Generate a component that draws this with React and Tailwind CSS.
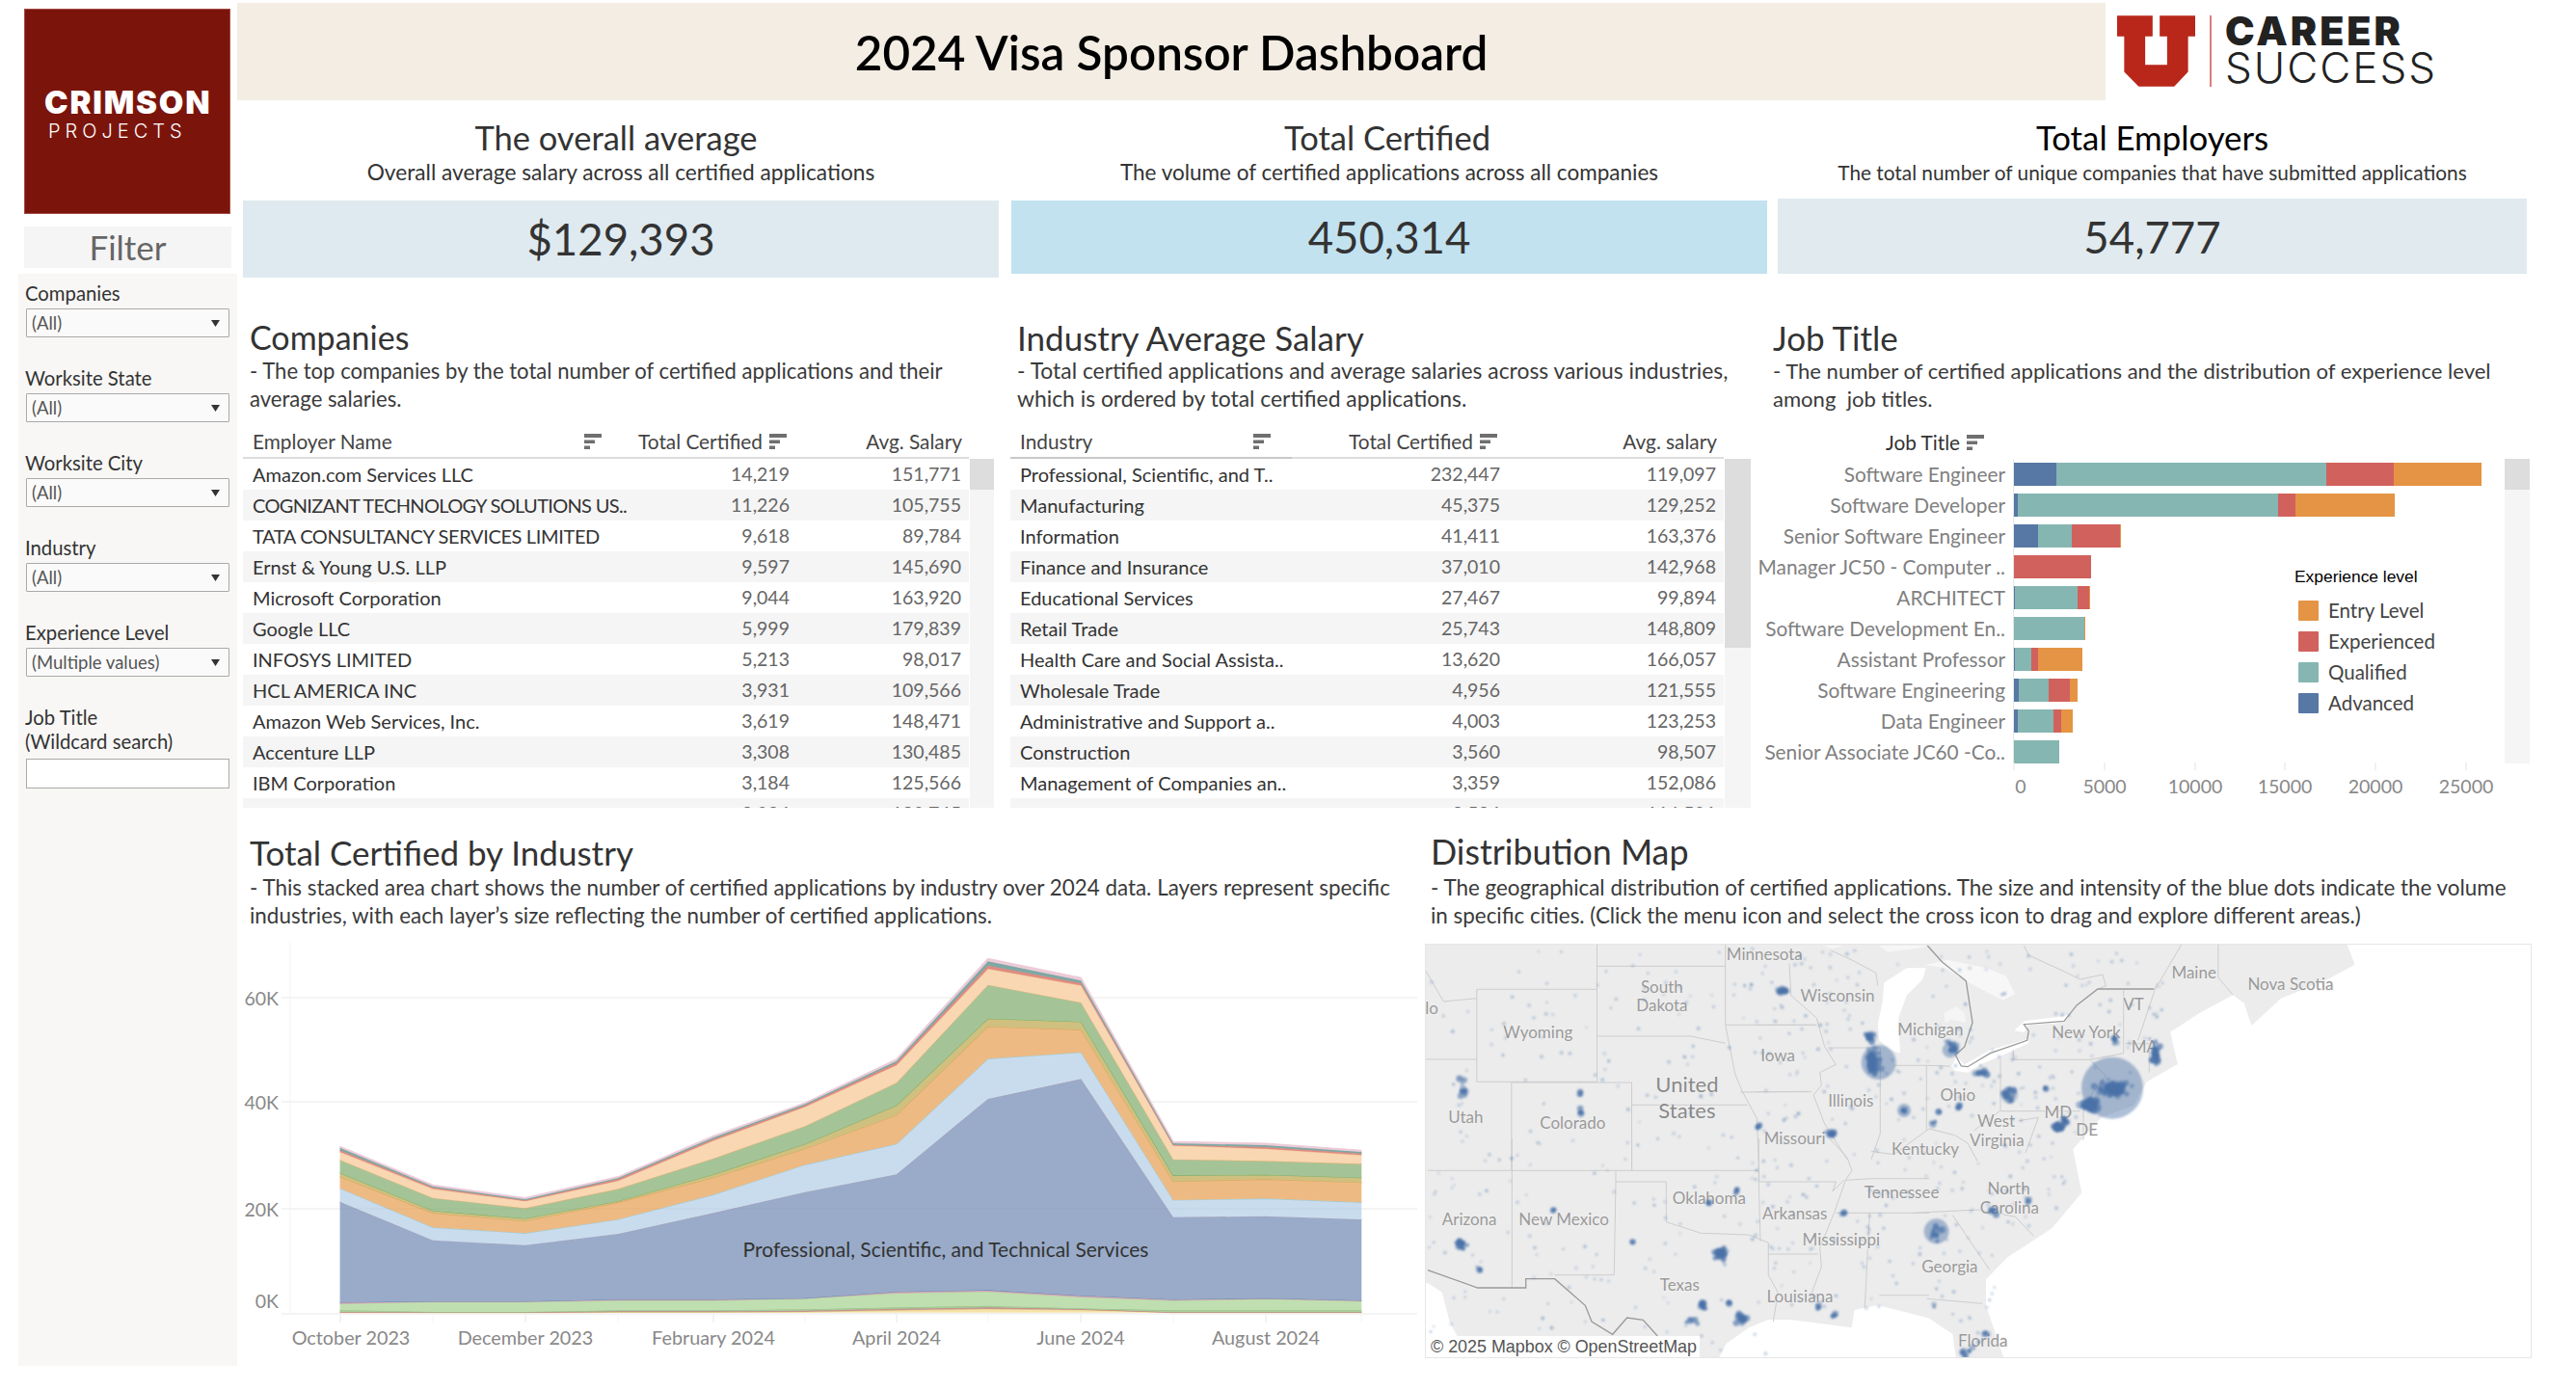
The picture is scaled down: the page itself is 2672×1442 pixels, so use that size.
import React from "react"

const FONT = "font-['Lato','Noto_Sans',sans-serif]"

/* ─── table data ─── */
const COMPANIES = [
  ["Amazon.com Services LLC", "14,219", "151,771"],
  ["COGNIZANT TECHNOLOGY SOLUTIONS US..", "11,226", "105,755", "tracking-[-0.68px]"],
  ["TATA CONSULTANCY SERVICES LIMITED", "9,618", "89,784", "tracking-[-0.36px]"],
  ["Ernst & Young U.S. LLP", "9,597", "145,690"],
  ["Microsoft Corporation", "9,044", "163,920"],
  ["Google LLC", "5,999", "179,839"],
  ["INFOSYS LIMITED", "5,213", "98,017"],
  ["HCL AMERICA INC", "3,931", "109,566"],
  ["Amazon Web Services, Inc.", "3,619", "148,471"],
  ["Accenture LLP", "3,308", "130,485"],
  ["IBM Corporation", "3,184", "125,566"],
  ["Intel Corporation", "3,034", "180,745"],
]

const INDUSTRIES = [
  ["Professional, Scientific, and T..", "232,447", "119,097"],
  ["Manufacturing", "45,375", "129,252"],
  ["Information", "41,411", "163,376"],
  ["Finance and Insurance", "37,010", "142,968"],
  ["Educational Services", "27,467", "99,894"],
  ["Retail Trade", "25,743", "148,809"],
  ["Health Care and Social Assista..", "13,620", "166,057"],
  ["Wholesale Trade", "4,956", "121,555"],
  ["Administrative and Support a..", "4,003", "123,253"],
  ["Construction", "3,560", "98,507"],
  ["Management of Companies an..", "3,359", "152,086"],
  ["Transportation and Warehousing", "2,524", "116,501"],
]

// segment widths in px: advanced, qualified, experienced, entry
const JOBS = [
  ["Software Engineer", 44, 280, 70, 91],
  ["Software Developer", 4, 270, 18, 103],
  ["Senior Software Engineer", 25, 35, 50, 1],
  ["Manager JC50 - Computer ..", 0, 0, 80, 0],
  ["ARCHITECT", 1, 65, 12, 1],
  ["Software Development En..", 0, 73, 0, 1],
  ["Assistant Professor", 1, 17, 7, 46],
  ["Software Engineering", 5, 31, 22, 8],
  ["Data Engineer", 4, 37, 8, 12],
  ["Senior Associate JC60 -Co..", 0, 47, 0, 0],
]

function SortIcon({ className = "" }) {
  return (
    <svg className={className} width="18" height="16" viewBox="0 0 18 16" fill="#6f6f6f">
      <rect x="0" y="0" width="18" height="4" />
      <rect x="0" y="6.5" width="11" height="3.5" />
      <rect x="0" y="12.5" width="6" height="3.5" />
    </svg>
  )
}

function Filter({ label, value, className = "" }) {
  return (
    <div className={className}>
      <div className="text-[20.3px] leading-[25px] text-[#333] pl-[7px] whitespace-nowrap">{label}</div>
      <div className="ml-[8px] mt-[3px] w-[211px] h-[30px] border border-[#aaa] bg-[#fafafa] rounded-[1px] flex items-center justify-between pl-[5px] pr-[9px]">
        <span className="text-[18.5px] text-[#555] pt-[1px]">{value}</span>
        <svg width="9" height="7" viewBox="0 0 9 7" fill="#333"><path d="M0 0h9L4.5 7z" /></svg>
      </div>
    </div>
  )
}

function DataTable({ nameHeader, avgHeader, rows, widthClass, labelClass, certClass, avgClass, iconClass, scrollThumbClass, headerAccent }) {
  return (
    <div>
      <div className={`${widthClass} h-[48px] flex items-end border-b-2 border-[#ddd] text-[20.8px] text-[#444] whitespace-nowrap`}>
        <div className={`${labelClass} relative pl-[10px] h-full flex items-end pb-[1px] ${headerAccent ? "border-b-2 -mb-[2px] border-[#c8c8c8]" : ""}`}>
          {nameHeader}
          <SortIcon className={iconClass} />
        </div>
        <div className={`${certClass} h-full flex items-end justify-end pb-[1px] pr-[3px]`}>
          Total Certified
          <SortIcon className="ml-[7px] mb-[7px]" />
        </div>
        <div className={`${avgClass} h-full flex items-end justify-end pb-[1px] pr-[7px]`}>{avgHeader}</div>
      </div>
      <div className="flex h-[362px] overflow-hidden">
        <div className={widthClass}>
          {rows.map((r, i) => (
            <div key={r[0]} className={`h-[32px] flex items-center ${i % 2 ? "bg-[#f5f5f5]" : "bg-white"}`}>
              <div className={`${labelClass} pl-[10px] text-[20px] text-[#333] whitespace-nowrap ${r[3] || ""}`}>{r[0]}</div>
              <div className={`${certClass} text-right text-[19.5px] text-[#666]`}>{r[1]}</div>
              <div className={`${avgClass} text-right pr-[8px] text-[19.5px] text-[#666]`}>{r[2]}</div>
            </div>
          ))}
        </div>
        <div className="flex-1 ml-[1px] bg-[#f5f5f5]">
          <div className={`${scrollThumbClass} bg-[#ddd]`} />
        </div>
      </div>
    </div>
  )
}

function JobChart() {
  const ticks = [2183, 2277, 2370, 2464, 2558]
  return (
    <div className="relative">
      <div className="h-[48px] pl-[140px] pb-[2px] flex items-end text-[20.8px] text-[#333]">
        Job Title
        <SortIcon className="ml-[7px] mb-[7px]" />
      </div>
      <div className="flex h-[316px]">
        <div className="w-[782px] overflow-hidden">
          {JOBS.map((j) => (
            <div key={j[0]} className="h-[32px] flex items-center">
              <div className="w-[264px] text-right text-[20.8px] text-[#808080] whitespace-nowrap">{j[0]}</div>
              <div className="ml-[8px] h-[32px] flex items-center border-l border-[#e6e6e6]">
                <div className="h-[24px] flex">
                  <div className="bg-[#5778a4]" style={{ width: j[1] }} />
                  <div className="bg-[#85b6b2]" style={{ width: j[2] }} />
                  <div className="bg-[#d1615d]" style={{ width: j[3] }} />
                  <div className="bg-[#e49444]" style={{ width: j[4] }} />
                </div>
              </div>
            </div>
          ))}
        </div>
        <div className="w-[26px] bg-[#f5f5f5]">
          <div className="h-[32px] bg-[#ddd]" />
        </div>
      </div>
      <svg width="782" height="50" viewBox="1816 790 782 50" className="block -mt-[1px]">
        {[2089, ...ticks].map((t) => (
          <line key={t} x1={t} x2={t} y1="790" y2="798" stroke="#e2e2e2" />
        ))}
        {["0", "5000", "10000", "15000", "20000", "25000"].map((t, i) => (
          <text key={t} x={i === 0 ? 2096 : ticks[i - 1]} y="822" textAnchor="middle" fontSize="19.5" fill="#888">{t}</text>
        ))}
      </svg>
      {/* legend sits over the plot */}
      <div className="absolute left-[564px] top-[158px]">
        <div className="font-['Liberation_Sans',sans-serif] text-[17.4px] leading-[24px] text-black whitespace-nowrap">Experience level</div>
        <div className="mt-[13px] ml-[4px] flex flex-col gap-[11px]">
          {[["Entry Level", "bg-[#e49444]"], ["Experienced", "bg-[#d1615d]"], ["Qualified", "bg-[#85b6b2]"], ["Advanced", "bg-[#5778a4]"]].map(([n, c]) => (
            <div key={n} className="flex items-center h-[21px] text-[20.5px] text-[#444]">
              <div className={`w-[21px] h-[21px] rounded-[1px] ${c}`} />
              <span className="ml-[10px]">{n}</span>
            </div>
          ))}
        </div>
      </div>
    </div>
  )
}

/* ─── stacked area ─── */
const AX = [155, 277, 398, 520, 645, 765, 885, 1005, 1127, 1248, 1369, 1495]
const LAYERS = [
  ["#f5e3a8", "#e9d38c", [1205, 1205, 1205, 1204, 1204, 1203, 1198, 1194, 1197, 1205, 1205, 1205]],
  ["#c99a95", "#c08a88", [1203, 1204, 1204, 1201, 1201, 1199, 1193, 1189, 1194, 1204, 1204, 1204]],
  ["#a9cf9a", "#9cc48c", [1197, 1203, 1203, 1198, 1198, 1195, 1189, 1184, 1192, 1198, 1198, 1198]],
  ["#c0dfb0", "#b5d6a5", [1178, 1172, 1172, 1168, 1168, 1162, 1145, 1140, 1157, 1168, 1163, 1170]],
  ["#d9a6b8", "#6f8ab2", [1173, 1170, 1170, 1164, 1164, 1160, 1140, 1135, 1152, 1164, 1160, 1167]],
  ["#99abc8", "#a8a3bd", [860, 980, 995, 960, 895, 830, 775, 540, 478, 908, 905, 915]],
  ["#c9dcee", "#a3ccd2", [818, 940, 958, 915, 838, 745, 680, 415, 395, 855, 850, 862]],
  ["#eeba83", "#d9a860", [782, 895, 920, 862, 785, 695, 590, 315, 325, 797, 790, 800]],
  ["#d0c07f", "#7fae68", [770, 888, 912, 858, 775, 680, 560, 290, 300, 778, 776, 785]],
  ["#a4c497", "#e0b47c", [730, 848, 880, 820, 725, 625, 490, 185, 240, 728, 733, 742]],
  ["#f8d7b2", "#f0c49a", [705, 820, 858, 795, 670, 565, 435, 135, 187, 685, 695, 715]],
  ["#e08a80", "#e08a80", [700, 816, 856, 790, 665, 560, 428, 125, 180, 683, 690, 710]],
  ["#7fa8a5", "#7fa8a5", [692, 812, 852, 786, 660, 556, 422, 112, 172, 678, 684, 705]],
  ["#eccbd8", "#eccbd8", [688, 808, 848, 782, 655, 552, 416, 103, 163, 673, 678, 700]],
]
const ax = (x) => 230 + x / 1.2645
const ay = (y) => 960 + y / 3

function AreaChart() {
  const pts = (ys) => ys.map((y, i) => `${ax(AX[i]).toFixed(1)},${ay(y).toFixed(1)}`)
  const base = AX.map(() => 1205)
  const months = [["October 2023", 364], ["December 2023", 545], ["February 2024", 740], ["April 2024", 930], ["June 2024", 1121], ["August 2024", 1313]]
  return (
    <svg width="1224" height="453" viewBox="246 964 1224 453" className="block">
      <line x1="301" x2="301" y1="977" y2="1363" stroke="#f3f3f3" />
      {[[1035, "60K", 1043], [1143, "40K", 1151], [1254, "20K", 1262], [1363, "0K", 1357]].map(([y, t, ty]) => (
        <g key={t}>
          <line x1="292" x2="1470" y1={y} y2={y} stroke="#f0f0f0" strokeWidth="1.5" />
          <text x="289" y={ty} textAnchor="end" fontSize="19.5" fill="#888">{t}</text>
        </g>
      ))}
      {LAYERS.map(([fill, stroke, ys], i) => {
        const below = i === 0 ? base : LAYERS[i - 1][2]
        const d = [...pts(ys), ...pts(below).reverse()].join(" ")
        return (
          <g key={i}>
            <polygon points={d} fill={fill} />
            <polyline points={pts(ys).join(" ")} fill="none" stroke={stroke} strokeWidth="1.2" />
          </g>
        )
      })}
      <line x1="353" x2="1412" y1="1254" y2="1254" stroke="#000" strokeOpacity="0.025" strokeWidth="1.5" />
      {[353, 449, 545, 641, 740, 835, 930, 1025, 1121, 1217, 1313, 1412].map((x, i) => (
        <line key={x} x1={x} x2={x} y1="1364" y2="1372" stroke={i % 2 ? "#f4f4f4" : "#e6e6e6"} />
      ))}
      {months.map(([t, x]) => (
        <text key={t} x={x} y="1395" textAnchor="middle" fontSize="19.8" fill="#888">{t}</text>
      ))}
      <text x="981" y="1304" textAnchor="middle" fontSize="21" fill="#333">Professional, Scientific, and Technical Services</text>
    </svg>
  )
}

/* ─── map: coordinates read off the reference, three crops with their own scale ─── */
const z6 = ([x, y]) => [(x - 11) / 1.3067, (y - 58) / 3]
const z1 = ([x, y]) => [342 + x / 3, -4 + y / 3]
const z2 = ([x, y]) => [2 + x / 3, 201 + y / 3]
const toPts = (arr, f) => arr.map((p) => f(p).map((n) => n.toFixed(1)).join(",")).join(" ")

const LAND = [[11, 58], [1260, 58], [1270, 120], [1230, 170], [1170, 225], [1130, 310], [1120, 240], [1105, 215], [1060, 270], [1020, 330], [1030, 430], [988, 485], [970, 560], [927, 595], [888, 695], [900, 830], [860, 940], [800, 1030], [770, 1100], [770, 1180], [795, 1350], [730, 1350], [725, 1270], [692, 1220], [623, 1180], [592, 1195], [588, 1250], [523, 1230], [505, 1225], [475, 1225], [449, 1250], [418, 1300], [407, 1350], [70, 1350], [52, 1270], [43, 1230], [33, 1140], [13, 1110], [11, 1110]]

const LAKES = [
  ["#fff", [[400, 130], [470, 85], [530, 85], [520, 120], [470, 170], [445, 240], [450, 350], [420, 340], [385, 310], [380, 260], [395, 190]]],
  ["#f7f7f7", [[525, 75], [600, 60], [720, 85], [780, 110], [808, 165], [770, 185], [720, 160], [655, 125], [590, 85]]],
  ["#f5f5f5", [[585, 225], [625, 205], [650, 225], [655, 255], [610, 245], [590, 255]]],
  ["#fff", [[610, 390], [625, 360], [650, 385], [730, 340], [850, 305], [850, 318], [760, 360], [700, 385], [660, 410], [620, 405]]],
  ["#fff", [[805, 280], [835, 250], [960, 235], [990, 215], [960, 255], [850, 262], [835, 285]]],
  ["#f6f6f6", [[385, 15], [410, 35], [450, 30], [520, 20], [530, 15]]],
  ["#f6f6f6", [[210, 15], [270, 15], [240, 25]]],
]

const LINES_Z6 = [
  [[80, 197], [243, 197], [243, 485], [80, 485], [80, 197]],
  [[243, 58], [243, 197]],
  [[243, 125], [417, 125]],
  [[243, 343], [370, 343], [417, 365]],
  [[417, 58], [417, 308], [430, 460], [440, 515], [460, 600], [463, 795]],
  [[417, 308], [540, 308]],
  [[437, 517], [530, 515]],
  [[127, 487], [290, 487], [290, 760]],
  [[127, 487], [127, 760]],
  [[290, 557], [447, 557]],
  [[11, 415], [80, 415]],
  [[11, 140], [35, 235], [80, 225]],
  [[1085, 58], [1085, 160], [1105, 215]],
  [[1035, 58], [1000, 195]],
  [[672, 893], [760, 883], [810, 905], [835, 965]],
  [[690, 1160], [765, 1175]],
  [[725, 900], [775, 1070]],
]
const LINES_Z1 = [
  [[835, 15], [850, 45], [960, 95], [1010, 120], [1080, 105], [1090, 140], [1065, 150]],
  [[235, 30], [300, 60], [375, 100], [380, 140]],
  [[0, 262], [190, 262]],
  [[105, 70], [110, 170], [190, 240], [215, 330], [250, 385], [200, 410], [205, 450], [180, 480], [215, 570], [285, 680]],
  [[225, 333], [388, 333], [388, 600], [360, 680]],
  [[430, 388], [532, 388], [532, 590]],
  [[532, 388], [605, 390]],
  [[762, 370], [762, 530], [1010, 530]],
  [[802, 340], [802, 370], [1040, 370], [1090, 420], [1050, 470], [1020, 530]],
  [[0, 470], [175, 470]],
  [[360, 655], [430, 665], [540, 585], [620, 605], [660, 630], [690, 685]],
  [[680, 590], [760, 530]],
  [[820, 560], [880, 550], [840, 660]],
  [[1040, 370], [1145, 350], [1145, 150]],
  [[1150, 320], [1225, 320], [1225, 410]],
  [[1250, 130], [1190, 310]],
  [[1020, 530], [1020, 620]],
]
const LINES_Z2 = [
  [[0, 100], [1030, 100]],
  [[262, 0], [262, 465]],
  [[635, 0], [635, 100]],
  [[1030, 0], [1030, 135], [1035, 320]],
  [[585, 100], [585, 135], [742, 135], [742, 260], [850, 295], [1000, 300], [1060, 325], [1060, 425], [1090, 480], [1075, 570]],
  [[585, 135], [580, 425], [395, 425]],
  [[1030, 135], [1270, 135], [1260, 165], [1295, 130]],
  [[1060, 360], [1215, 360]],
  [[1250, 0], [1305, 60], [1320, 100], [1300, 130], [1265, 230], [1220, 340], [1225, 400], [1195, 480]],
  [[1270, 232], [1560, 232]],
  [[1375, 232], [1360, 525]],
  [[1405, 488], [1560, 488]],
  [[1300, 130], [1380, 125], [1560, 125]],
]

const BORDER_Z1 = [[535, 15], [580, 65], [655, 125], [675, 255], [650, 330], [622, 355], [640, 390], [660, 392], [730, 350], [845, 310], [850, 280], [835, 260], [960, 250], [1000, 200], [1065, 150], [1240, 150]]
const BORDER_Z2 = [[0, 410], [155, 465], [305, 465], [305, 437], [395, 437], [490, 520], [510, 570], [575, 610], [620, 558], [670, 565], [715, 615]]

// translucent halos of the largest cities: crop, x, y, radius, opacity
const HALOS = [
  [z1, 1110, 458, 32, 0.45], [z1, 383, 378, 18, 0.45], [z1, 605, 340, 8, 0.45], [z1, 462, 528, 7, 0.45], [z1, 790, 480, 9, 0.3],
  [z6, 703, 950, 13, 0.45], [z1, 360, 298, 6, 0.35],
]
// tight groups of small dots: crop, x, y, spread x, spread y, count
const GROUPS = [
  [z1, 1115, 460, 75, 28, 110], [z1, 1040, 510, 42, 28, 60], [z1, 365, 375, 32, 55, 60], [z1, 360, 298, 20, 20, 16],
  [z1, 612, 330, 26, 26, 18], [z1, 82, 155, 26, 15, 20], [z1, 462, 528, 10, 10, 5], [z1, 705, 410, 26, 13, 14],
  [z1, 790, 480, 30, 30, 22], [z1, 938, 582, 30, 20, 32], [z1, 965, 560, 12, 14, 10], [z1, 235, 600, 18, 15, 14],
  [z1, 635, 518, 10, 10, 5], [z1, 555, 565, 14, 8, 5], [z1, 570, 530, 10, 8, 3], [z1, 10, 578, 10, 8, 5],
  [z1, 1245, 350, 18, 38, 34], [z1, 1118, 315, 6, 14, 5], [z1, 900, 460, 14, 4, 3],
  [z2, 105, 330, 24, 18, 18], [z2, 163, 410, 6, 10, 4], [z2, 910, 358, 34, 30, 40], [z2, 860, 520, 18, 15, 16],
  [z2, 975, 558, 24, 26, 22], [z2, 938, 510, 8, 8, 4], [z2, 820, 570, 24, 12, 6], [z2, 1265, 550, 12, 6, 5],
  [z2, 1215, 525, 7, 9, 4], [z2, 960, 160, 8, 8, 4], [z2, 875, 200, 6, 5, 3], [z2, 390, 225, 5, 8, 3], [z2, 640, 322, 8, 4, 3],
  [z2, 1295, 232, 8, 6, 4], [z6, 62, 512, 7, 45, 14], [z6, 703, 950, 14, 35, 14], [z6, 220, 520, 3, 16, 4], [z6, 220, 575, 4, 28, 6],
  [z6, 780, 890, 7, 18, 5], [z6, 828, 850, 5, 14, 3], [z6, 745, 1330, 14, 28, 8], [z6, 770, 1270, 5, 14, 3], [z6, 700, 1180, 4, 8, 2],
  [z6, 945, 355, 5, 28, 5],
]

const MAP_LABELS = [
  ["Minnesota", 470, 88], ["Wisconsin", 569, 218], ["South", 331, 190], ["Dakota", 331, 248], ["Wyoming", 163, 331],
  ["Michigan", 695, 322], ["Iowa", 488, 403], ["New York", 906, 330], ["MA", 985, 376], ["VT", 970, 245], ["Maine", 1052, 145],
  ["Nova Scotia", 1183, 181], ["Utah", 65, 596], ["Colorado", 210, 612], ["Illinois", 587, 543], ["Ohio", 732, 525], ["Missouri", 511, 662],
  ["MD", 868, 580], ["DE", 907, 635], ["West", 784, 608], ["Virginia", 785, 668], ["Kentucky", 688, 694], ["Tennessee", 656, 830],
  ["North", 801, 818], ["Carolina", 802, 876], ["Oklahoma", 395, 847], ["Arkansas", 511, 896], ["Arizona", 70, 912], ["New Mexico", 198, 912],
  ["Mississippi", 574, 976], ["Georgia", 721, 1061], ["Texas", 355, 1118], ["Louisiana", 518, 1153], ["Florida", 766, 1292], ["lo", 19, 255],
]

function buildDots() {
  // cheap seeded scatter so the map looks the same on every load
  let s = 12345
  const rnd = () => ((s = (s * 1664525 + 1013904223) % 4294967296) / 4294967296)
  const gauss = () => (rnd() + rnd() + rnd() - 1.5) / 1.5
  const coast = [[58, 1000], [300, 1020], [500, 980], [640, 900], [830, 890], [940, 850], [1030, 790], [1350, 780]]
  const maxX = (y) => {
    for (let i = 1; i < coast.length; i++) {
      if (y <= coast[i][0]) {
        const t = (y - coast[i - 1][0]) / (coast[i][0] - coast[i - 1][0])
        return coast[i - 1][1] + t * (coast[i][1] - coast[i - 1][1])
      }
    }
    return 780
  }
  const out = []
  for (let i = 0; i < 640; i++) {
    const east = rnd() < 0.68
    const x = east ? 450 + rnd() * 560 : 15 + rnd() * 520
    const y = 70 + rnd() * 1270
    const inLake = x > 612 && x < 690 && y < 345 && y > 125
    const inGulf = y > 1190 && x > 500 && x < 725
    if (x > maxX(y) || inLake || inGulf) continue
    const [px, py] = z6([x, y])
    out.push([px, py, 1.2 + rnd() * 0.8, 0.2 + rnd() * 0.25])
  }
  GROUPS.forEach(([f, x, y, sx, sy, n]) => {
    for (let i = 0; i < n; i++) {
      const [px, py] = f([x + gauss() * sx, y + gauss() * sy])
      out.push([px, py, 1.8 + rnd() * 1.8, 0.4 + rnd() * 0.3])
    }
  })
  return out
}

function MapChart() {
  const dots = buildDots()
  return (
    <div className="relative ml-[-6px] w-[1148px] h-[430px] border border-[#e6e6e6] overflow-hidden bg-white mt-[15px]">
      <svg width="1148" height="430" viewBox="0 0 1148 430" className="block">
        <defs>
          <filter id="soft" x="-5%" y="-5%" width="110%" height="110%"><feGaussianBlur stdDeviation="0.9" /></filter>
        </defs>
        <polygon points={toPts(LAND, z6)} fill="#ececec" />
        {LAKES.map(([c, l], i) => <polygon key={i} points={toPts(l, z1)} fill={c} />)}
        <g fill="none" stroke="#cdcdcd" strokeWidth="1">
          {LINES_Z6.map((l, i) => <polyline key={i} points={toPts(l, z6)} />)}
          {LINES_Z1.map((l, i) => <polyline key={i} points={toPts(l, z1)} />)}
          {LINES_Z2.map((l, i) => <polyline key={i} points={toPts(l, z2)} />)}
        </g>
        <g fill="none" stroke="#999" strokeWidth="1.3">
          <polyline points={toPts(BORDER_Z1, z1)} />
          <polyline points={toPts(BORDER_Z2, z2)} />
        </g>
        <g fontSize="17" fill="#9a9a9a" textAnchor="middle" stroke="#f0f0f0" strokeWidth="1.5" paintOrder="stroke">
          {MAP_LABELS.map(([t, x, y]) => {
            const [px, py] = z6([x, y])
            return <text key={t} x={px} y={py + 6}>{t}</text>
          })}
          <text x={z6([365, 0])[0]} y={z6([0, 492])[1] + 8} fontSize="22" fill="#8a8a8a">United</text>
          <text x={z6([365, 0])[0]} y={z6([0, 574])[1] + 8} fontSize="22" fill="#8a8a8a">States</text>
        </g>
        <g fill="#4a72a8" filter="url(#soft)">
          {HALOS.map(([f, x, y, r, o], i) => {
            const [px, py] = f([x, y])
            return <circle key={i} cx={px} cy={py} r={r} fillOpacity={o} />
          })}
          {dots.map(([x, y, r, o], i) => <circle key={i} cx={x} cy={y} r={r} fillOpacity={o} />)}
        </g>
      </svg>
      <div className="absolute left-[2px] bottom-[0px] bg-white/95 px-[3px] h-[22px] flex items-center font-['Liberation_Sans',sans-serif] text-[17.9px] text-[#555] whitespace-nowrap">© 2025 Mapbox © OpenStreetMap</div>
    </div>
  )
}

function Section({ title, lines, className = "", tight, titleClass = "text-[35px]", descClass = "text-[22.4px]" }) {
  return (
    <div className={className}>
      <h2 className={`${titleClass} leading-[40px] text-[#333] whitespace-nowrap`}>{title}</h2>
      <p className={`${tight ? "" : "mt-[2px]"} ${descClass} leading-[29px] text-[#3a3a3a] whitespace-nowrap`}>
        {lines[0]}<br />{lines[1]}
      </p>
    </div>
  )
}

export default function App() {
  return (
    <div className={`${FONT} w-[2672px] h-[1442px] bg-white flex overflow-hidden`}>
      {/* sidebar */}
      <aside className="w-[246px] shrink-0 pt-[9px]">
        <div className="ml-[25px] w-[214px] h-[213px] bg-[#7b150c] border border-[#a44a44] flex flex-col pt-[79px] pl-[20px] text-white">
          <div className="font-['Inter',sans-serif] font-black text-[33px] leading-[34px] tracking-[1.8px] whitespace-nowrap">CRIMSON</div>
          <div className="font-['Inter',sans-serif] font-light text-[20px] leading-[26px] tracking-[5px] pl-[4px] whitespace-nowrap">PROJECTS</div>
        </div>
        <div className="ml-[25px] mt-[13px] w-[215px] h-[43px] bg-[#f5f5f5] text-[35px] leading-[43px] text-center text-[#666]">Filter</div>
        <div className="ml-[19px] mt-[6px] h-[1133px] bg-[#f8f7f5] pt-[8px]">
          <Filter label="Companies" value="(All)" />
          <Filter label="Worksite State" value="(All)" className="mt-[30px]" />
          <Filter label="Worksite City" value="(All)" className="mt-[30px]" />
          <Filter label="Industry" value="(All)" className="mt-[30px]" />
          <Filter label="Experience Level" value="(Multiple values)" className="mt-[30px]" />
          <div className="mt-[30px] text-[20.3px] leading-[25px] text-[#333] pl-[7px] whitespace-nowrap">Job Title<br />(Wildcard search)</div>
          <div className="ml-[8px] mt-[5px] w-[211px] h-[31px] border border-[#aaa] bg-white" />
        </div>
      </aside>

      <main className="flex-1 min-w-0 pt-[3px]">
        {/* banner */}
        <div className="flex h-[101px]">
          <div className="w-[1938px] bg-[#f4ede4] flex items-center justify-center pt-[2px] text-[49.4px] text-black font-semibold whitespace-nowrap">2024 Visa Sponsor Dashboard</div>
          <div className="flex ml-[12px] mt-[13px] h-[74px]">
            <svg width="81" height="74" viewBox="48 36 242 219">
              <path fill="#b9261a" d="M48 36H158V100H135V188H203V100H180V36H290V100H268V210L225 255H115L70 210V100H48Z" />
            </svg>
            <div className="w-[2px] bg-[#d9807a] ml-[15px]" />
            <div className="ml-[14px] font-['Inter',sans-serif] text-[#222]">
              <div className="font-black text-[41px] leading-[32px] tracking-[3px]">CAREER</div>
              <div className="font-light text-[44px] leading-[40px] mt-[2px] tracking-[2px]">SUCCESS</div>
            </div>
          </div>
        </div>

        {/* KPI row */}
        <div className="flex h-[184px] pl-[6px] gap-[13px]">
          <div className="w-[784px] text-center">
            <div className="mt-[19px] pr-[10px] text-[34.5px] leading-[40px] text-[#333]">The overall average</div>
            <div className="text-[22.7px] leading-[32px] text-[#333]">Overall average salary across all certified applications</div>
            <div className="mt-[13px] h-[80px] bg-[#dfeaf0] flex items-center justify-center text-[45.5px] text-[#333]">$129,393</div>
          </div>
          <div className="w-[784px] text-center">
            <div className="mt-[19px] pr-[4px] text-[34.5px] leading-[40px] text-[#333]">Total Certified</div>
            <div className="text-[22.5px] leading-[32px] text-[#333]">The volume of certified applications across all companies</div>
            <div className="mt-[13px] h-[76px] bg-[#c2e2f0] flex items-center justify-center text-[45.5px] text-[#333]">450,314</div>
          </div>
          <div className="w-[777px] -ml-[2px] text-center">
            <div className="mt-[19px] text-[34.8px] leading-[40px] text-black">Total Employers</div>
            <div className="text-[20.8px] leading-[32px] text-[#333]">The total number of unique companies that have submitted applications</div>
            <div className="mt-[11px] pt-[2px] h-[78px] bg-[#e0eaef] flex items-center justify-center text-[45.5px] text-[#333]">54,777</div>
          </div>
        </div>

        {/* middle row */}
        <div className="flex h-[576px] pt-[42px] pl-[6px]">
          <div className="w-[779px]">
            <Section
              tight
              className="pl-[7px]"
              titleClass="text-[34px]"
              descClass="text-[22.1px]"
              title="Companies"
              lines={["- The top companies by the total number of certified applications and their", "average salaries."]}
            />
            <DataTable
              nameHeader="Employer Name"
              avgHeader="Avg. Salary"
              rows={COMPANIES}
              widthClass="w-[753px]"
              labelClass="w-[388px]"
              certClass="w-[179px]"
              avgClass="w-[186px]"
              iconClass="absolute left-[354px] bottom-[8px]"
              scrollThumbClass="h-[32px]"
            />
          </div>
          <div className="w-[768px] ml-[17px]">
            <Section
              tight
              className="pl-[7px]"
              descClass="text-[22.85px]"
              title="Industry Average Salary"
              lines={["- Total certified applications and average salaries across various industries,", "which is ordered by total certified applications."]}
            />
            <DataTable
              nameHeader="Industry"
              avgHeader="Avg. salary"
              rows={INDUSTRIES}
              widthClass="w-[740px]"
              labelClass="w-[292px]"
              certClass="w-[216px]"
              avgClass="w-[232px]"
              iconClass="absolute left-[252px] bottom-[8px]"
              scrollThumbClass="h-[196px]"
              headerAccent
            />
          </div>
          <div className="flex-1 min-w-0">
            <Section
              tight
              className="pl-[23px]"
              descClass="text-[22.05px]"
              title="Job Title"
              lines={["- The number of certified applications and the distribution of experience level", "among\u00a0 job titles."]}
            />
            <JobChart />
          </div>
        </div>

        {/* bottom row */}
        <div className="flex">
          <div className="w-[1224px] shrink-0">
            <Section
              className="pl-[13px]"
              title="Total Certified by Industry"
              lines={["- This stacked area chart shows the number of certified applications by industry over 2024 data. Layers represent specific", "industries, with each layer’s size reflecting the number of certified applications."]}
            />
            <AreaChart />
          </div>
          <div className="flex-1 min-w-0 pl-[14px]">
            <Section
              titleClass="text-[35.8px]"
              title="Distribution Map"
              lines={["- The geographical distribution of certified applications. The size and intensity of the blue dots indicate the volume", "in specific cities. (Click the menu icon and select the cross icon to drag and explore different areas.)"]}
            />
            <MapChart />
          </div>
        </div>
      </main>
    </div>
  )
}
